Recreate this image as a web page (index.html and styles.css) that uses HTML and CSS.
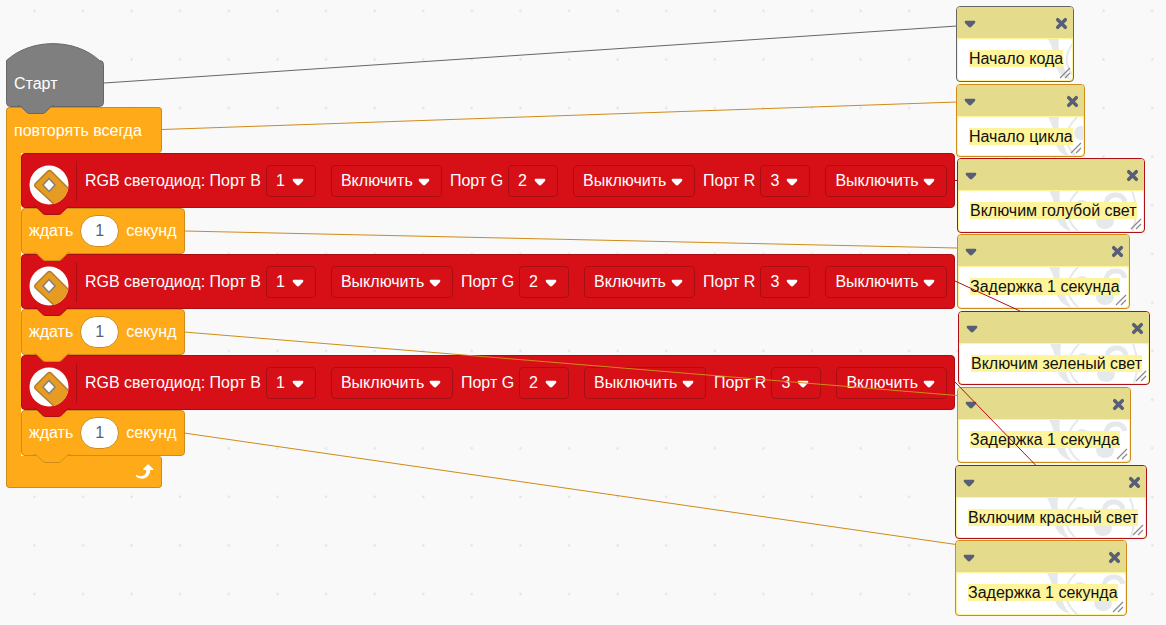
FILE: index.html
```html
<!DOCTYPE html>
<html lang="ru">
<head>
<meta charset="utf-8">
<title>Редактор блоков</title>
<link rel="stylesheet" href="styles.css">
</head>
<body>
<main class="workspace">
  <svg class="grid" aria-hidden="true">
    <defs>
      <pattern id="dots" x="10" y="-13.6" width="48.6" height="48.6" patternUnits="userSpaceOnUse">
        <rect x="23.4" y="23.4" width="2" height="2" fill="#ddd"/>
      </pattern>
    </defs>
    <rect width="100%" height="100%" fill="url(#dots)"/>
  </svg>
  <svg class="defs" aria-hidden="true">
    <defs>
      <symbol id="bump" viewBox="0 0 36 10">
        <path d="M0 0V1C2 1 3 2 4 3L8 7C9 8 10 8.5 12 8.5H24C26 8.5 27 8 28 7L32 3C33 2 34 1 36 1V0Z" fill="currentColor"/>
        <path d="M0 .5C2 .5 3 1.500 4 2.500L8 6.500C9 7.500 10 8.500 12 8.500H24C26 8.500 27 7.500 28 6.500L32 2.500C33 1.500 34 .5 36 .5" fill="none" stroke="var(--edge)"/>
      </symbol>
      <symbol id="caret" viewBox="0 0 12 8">
        <path d="M1.500 .8H10.500Q12 1.400 11 3L7.400 6.800Q6 8 4.600 6.800L1 3Q0 1.400 1.500 .8Z" fill="currentColor"/>
      </symbol>
      <symbol id="cross" viewBox="0 0 12 12">
        <path d="M2.500 2.500L9.500 9.500M9.500 2.500L2.500 9.500" stroke="currentColor" stroke-width="3.200" stroke-linecap="round"/>
      </symbol>
      <symbol id="led" viewBox="0 0 40 40">
        <clipPath id="disc"><circle cx="20" cy="20" r="19.500"/></clipPath>
        <circle cx="20" cy="20" r="19.500" fill="#fff"/>
        <g clip-path="url(#disc)">
          <path d="M18.500 6.500Q20.500 4.500 22.500 6.500L42 26L28 42L6.500 22Q5 20.500 6.500 18.500Z" fill="#e69b22" stroke="#b37d2c" stroke-width="1.500"/>
        </g>
        <path d="M20 13.500L26 20L20 26.500L14 20Z" fill="#fff" stroke="#808080" stroke-width="1.500"/>
      </symbol>
      <symbol id="panda" viewBox="0 0 90 42">
        <g fill="#e6e9ec">
          <path d="M1 0H12Q10 13 16 24Q17 33 24 41Q10 37 8 24Q7 10 1 0Z"/>
          <ellipse cx="34" cy="16" rx="7" ry="7"/>
          <ellipse cx="57" cy="30" rx="9" ry="8"/>
        </g>
        <g fill="none" stroke="#e6e9ec">
          <path d="M30 0Q18 12 20 24Q22 34 32 42" stroke-width="2"/>
          <path d="M84 0Q92 20 84 42" stroke-width="2"/>
          <path d="M77 11Q75 3 66 4Q56 6 59 18" stroke-width="5"/>
        </g>
      </symbol>
      <symbol id="grip" viewBox="0 0 12 12">
        <path d="M1 11L11 1M6 11L11 6" stroke="#888" stroke-width="1.200"/>
      </symbol>
    </defs>
  </svg>

  <section class="script">
    <div class="hat">
      <svg class="hat-shape" viewBox="0 0 98 64" aria-hidden="true"><path d="M.5 17.500C25 -5 69 -5 93.500 17.500Q97.500 17.500 97.500 21.500V59.500Q97.500 63.500 93.500 63.500H4.500Q.5 63.500 .5 59.500Z" fill="#7f7f7f" stroke="#666"/></svg>
      <span class="hat-label">Старт</span>
      <svg class="bump" aria-hidden="true"><use href="#bump"/></svg>
    </div>

    <div class="loop">
      <div class="loop-head">повторять всегда</div>
      <div class="loop-body">
        <div class="loop-arm"></div>
        <div class="loop-stack">

          <div class="block led">
            <svg class="led-icon" aria-hidden="true"><use href="#led"/></svg>
            <label class="port">RGB светодиод: Порт B <span class="drop num"><select><option>1</option></select><svg><use href="#caret"/></svg></span></label>
            <span class="drop on"><select aria-label="Порт B"><option>Включить</option><option>Выключить</option></select><svg><use href="#caret"/></svg></span>
            <label class="port">Порт G <span class="drop num"><select><option>2</option></select><svg><use href="#caret"/></svg></span></label>
            <span class="drop off"><select aria-label="Порт G"><option>Выключить</option><option>Включить</option></select><svg><use href="#caret"/></svg></span>
            <label class="port">Порт R <span class="drop num"><select><option>3</option></select><svg><use href="#caret"/></svg></span></label>
            <span class="drop off"><select aria-label="Порт R"><option>Выключить</option><option>Включить</option></select><svg><use href="#caret"/></svg></span>
            <svg class="bump" aria-hidden="true"><use href="#bump"/></svg>
          </div>
          <div class="block wait">
            <label class="seconds">ждать <input type="text" value="1"> секунд</label>
            <svg class="bump" aria-hidden="true"><use href="#bump"/></svg>
          </div>

          <div class="block led">
            <svg class="led-icon" aria-hidden="true"><use href="#led"/></svg>
            <label class="port">RGB светодиод: Порт B <span class="drop num"><select><option>1</option></select><svg><use href="#caret"/></svg></span></label>
            <span class="drop off"><select aria-label="Порт B"><option>Выключить</option><option>Включить</option></select><svg><use href="#caret"/></svg></span>
            <label class="port">Порт G <span class="drop num"><select><option>2</option></select><svg><use href="#caret"/></svg></span></label>
            <span class="drop on"><select aria-label="Порт G"><option>Включить</option><option>Выключить</option></select><svg><use href="#caret"/></svg></span>
            <label class="port">Порт R <span class="drop num"><select><option>3</option></select><svg><use href="#caret"/></svg></span></label>
            <span class="drop off"><select aria-label="Порт R"><option>Выключить</option><option>Включить</option></select><svg><use href="#caret"/></svg></span>
            <svg class="bump" aria-hidden="true"><use href="#bump"/></svg>
          </div>
          <div class="block wait">
            <label class="seconds">ждать <input type="text" value="1"> секунд</label>
            <svg class="bump" aria-hidden="true"><use href="#bump"/></svg>
          </div>

          <div class="block led">
            <svg class="led-icon" aria-hidden="true"><use href="#led"/></svg>
            <label class="port">RGB светодиод: Порт B <span class="drop num"><select><option>1</option></select><svg><use href="#caret"/></svg></span></label>
            <span class="drop off"><select aria-label="Порт B"><option>Выключить</option><option>Включить</option></select><svg><use href="#caret"/></svg></span>
            <label class="port">Порт G <span class="drop num"><select><option>2</option></select><svg><use href="#caret"/></svg></span></label>
            <span class="drop off"><select aria-label="Порт G"><option>Выключить</option><option>Включить</option></select><svg><use href="#caret"/></svg></span>
            <label class="port">Порт R <span class="drop num"><select><option>3</option></select><svg><use href="#caret"/></svg></span></label>
            <span class="drop on"><select aria-label="Порт R"><option>Включить</option><option>Выключить</option></select><svg><use href="#caret"/></svg></span>
            <svg class="bump" aria-hidden="true"><use href="#bump"/></svg>
          </div>
          <div class="block wait">
            <label class="seconds">ждать <input type="text" value="1"> секунд</label>
            <svg class="bump" aria-hidden="true"><use href="#bump"/></svg>
          </div>

        </div>
      </div>
      <div class="loop-foot">
        <svg class="repeat" viewBox="0 0 24 24" aria-hidden="true">
          <path d="M21.800 11h-2.600c0 1.500-.3 2.900-1 4.200c-.8 1.600-2.100 2.800-3.700 3.600c-1.500.8-3.300 1.100-4.900.8c-1.600-.2-3.200-1-4.400-2.100c-.4-.3-.4-.9-.1-1.200c.3-.4.9-.4 1.200-.1c1 .7 2.200 1.100 3.400 1.100s2.300-.3 3.300-1c.9-.6 1.600-1.500 2-2.600c.3-.9.4-1.800.2-2.800h-2.400c-.4 0-.7-.3-.7-.7c0-.2.1-.3.2-.4l4.400-4.400c.3-.3.7-.3.9 0L22 9.800c.3.3.4.6.3.9S22 11 21.800 11z" fill="#fff"/>
        </svg>
      </div>
    </div>
  </section>

  <article class="note gray n1">
    <header><button aria-label="Свернуть"><svg class="fold"><use href="#caret"/></svg></button><button aria-label="Удалить"><svg class="close"><use href="#cross"/></svg></button></header>
    <div class="note-body"><svg class="panda"><use href="#panda"/></svg><p><mark>Начало кода</mark></p><svg class="grip"><use href="#grip"/></svg></div>
  </article>
  <article class="note orange n2">
    <header><button aria-label="Свернуть"><svg class="fold"><use href="#caret"/></svg></button><button aria-label="Удалить"><svg class="close"><use href="#cross"/></svg></button></header>
    <div class="note-body"><svg class="panda"><use href="#panda"/></svg><p><mark>Начало цикла</mark></p><svg class="grip"><use href="#grip"/></svg></div>
  </article>
  <article class="note red n3">
    <header><button aria-label="Свернуть"><svg class="fold"><use href="#caret"/></svg></button><button aria-label="Удалить"><svg class="close"><use href="#cross"/></svg></button></header>
    <div class="note-body"><svg class="panda"><use href="#panda"/></svg><p><mark>Включим голубой свет</mark></p><svg class="grip"><use href="#grip"/></svg></div>
  </article>
  <article class="note orange n4">
    <header><button aria-label="Свернуть"><svg class="fold"><use href="#caret"/></svg></button><button aria-label="Удалить"><svg class="close"><use href="#cross"/></svg></button></header>
    <div class="note-body"><svg class="panda"><use href="#panda"/></svg><p><mark>Задержка 1 секунда</mark></p><svg class="grip"><use href="#grip"/></svg></div>
  </article>
  <article class="note red n5">
    <header><button aria-label="Свернуть"><svg class="fold"><use href="#caret"/></svg></button><button aria-label="Удалить"><svg class="close"><use href="#cross"/></svg></button></header>
    <div class="note-body"><svg class="panda"><use href="#panda"/></svg><p><mark>Включим зеленый свет</mark></p><svg class="grip"><use href="#grip"/></svg></div>
  </article>
  <article class="note orange n6">
    <header><button aria-label="Свернуть"><svg class="fold"><use href="#caret"/></svg></button><button aria-label="Удалить"><svg class="close"><use href="#cross"/></svg></button></header>
    <div class="note-body"><svg class="panda"><use href="#panda"/></svg><p><mark>Задержка 1 секунда</mark></p><svg class="grip"><use href="#grip"/></svg></div>
  </article>
  <article class="note red n7">
    <header><button aria-label="Свернуть"><svg class="fold"><use href="#caret"/></svg></button><button aria-label="Удалить"><svg class="close"><use href="#cross"/></svg></button></header>
    <div class="note-body"><svg class="panda"><use href="#panda"/></svg><p><mark>Включим красный свет</mark></p><svg class="grip"><use href="#grip"/></svg></div>
  </article>
  <article class="note orange n8">
    <header><button aria-label="Свернуть"><svg class="fold"><use href="#caret"/></svg></button><button aria-label="Удалить"><svg class="close"><use href="#cross"/></svg></button></header>
    <div class="note-body"><svg class="panda"><use href="#panda"/></svg><p><mark>Задержка 1 секунда</mark></p><svg class="grip"><use href="#grip"/></svg></div>
  </article>

  <svg class="links" aria-hidden="true">
    <g stroke="#666"><path d="M104 83L957 26"/></g>
    <g stroke="#cf8b17"><path d="M162 129.500L957 102M184 231L957 248M184 332L957 395.500M184 433L956 544.500"/></g>
    <g stroke="#ae1018"><path d="M955 180.500H958M955 281L1020 311M955 382L1035.500 465"/></g>
  </svg>
</main>
</body>
</html>
```

FILE: styles.css
```css
* { box-sizing: border-box; }

body {
  margin: 0;
  font: 16px/20px "Liberation Sans", Arial, sans-serif;
}

.workspace {
  --orange: #ffab19;
  --orange-edge: #cf8b17;
  --red: #d71017;
  --red-edge: #a80f14;
  position: relative;
  min-height: 100vh;
  padding: 43px 6px 0;
  overflow: hidden;
  background: #f9f9f9;
}

.grid, .links {
  position: absolute;
  inset: 0;
  width: 100%;
  height: 100%;
  pointer-events: none;
}

.links { fill: none; }
.defs { position: absolute; width: 0; height: 0; }

.script {
  position: relative;
  display: flex;
  flex-direction: column;
  align-items: flex-start;
  color: #fff;
}

.bump {
  position: absolute;
  z-index: 1;
  left: 12px;
  bottom: -9px;
  width: 36px;
  height: 10px;
}

.hat {
  --edge: #666;
  position: relative;
  width: 98px;
  height: 64px;
  padding: 31px 8px 0;
}
.hat .bump { bottom: -8px; color: #7f7f7f; }
.hat-shape { position: absolute; inset: 0; width: 98px; height: 64px; }
.hat-label { position: relative; }

.loop-head, .loop-foot {
  width: 156px;
  border: 1px solid var(--orange-edge);
  background: var(--orange);
}
.loop-head {
  height: 46px;
  padding: 13px 7px;
  border-bottom: 0;
  border-radius: 4px 4px 4px 0;
}
.loop-body { display: flex; }
.loop-arm {
  width: 15px;
  border-left: 1px solid var(--orange-edge);
  background: var(--orange);
}
.loop-stack {
  display: flex;
  flex-direction: column;
  align-items: flex-start;
}
.loop-foot {
  display: flex;
  justify-content: flex-end;
  height: 32px;
  padding: 3px 6px 0;
  border-top: 0;
  border-radius: 0 4px 4px 4px;
}
.repeat { width: 24px; height: 24px; }

.block {
  position: relative;
  display: flex;
  align-items: center;
  border: 1px solid var(--edge);
  border-radius: 4px;
  white-space: nowrap;
}
.wait {
  --edge: var(--orange-edge);
  height: 46px;
  padding: 0 7px;
  background: var(--orange);
}
.wait .bump { color: var(--orange); }
.led {
  --edge: var(--red-edge);
  height: 55px;
  padding: 0 7px;
  background: var(--red);
}
.led .bump { color: var(--red); }
.led-icon { width: 40px; height: 40px; margin-top: 8px; }

.seconds { display: flex; align-items: center; gap: 7px; }
.port { display: flex; align-items: center; gap: 5px; }

.seconds input {
  width: 39px;
  height: 32px;
  padding: 0;
  border: 1px solid var(--orange-edge);
  border-radius: 16px;
  background: #fff;
  color: #575e75;
  font: inherit;
  text-align: center;
}

.led-icon + .port {
  height: 40px;
  margin-left: 7px;
  padding-left: 8px;
  border-left: 1px solid var(--red-edge);
}
.drop + .port { margin-left: 8px; }
.port + .drop { margin-left: 15px; }

.drop { position: relative; height: 32px; }
.num { width: 50px; }
.on { width: 111px; }
.off { width: 122px; }
.drop select {
  appearance: none;
  width: 100%;
  height: 32px;
  padding: 0 0 0 9px;
  border: 1px solid var(--red-edge);
  border-radius: 4px;
  background: transparent;
  color: #fff;
  font: inherit;
}
.drop svg {
  position: absolute;
  top: 13px;
  right: 12px;
  width: 12px;
  height: 8px;
  pointer-events: none;
}

.note {
  position: absolute;
  display: flex;
  flex-direction: column;
  height: 75px;
  border: 1px solid var(--edge);
  border-radius: 4px;
  overflow: hidden;
  background: #fef49c;
}
.gray { --edge: #666; }
.orange { --edge: #cf8b17; }
.red { --edge: #ae1018; }

.note header {
  display: flex;
  align-items: center;
  justify-content: space-between;
  height: 31px;
  padding: 2px 5px 0 7px;
  background: #e4db8c;
}
.note button {
  display: flex;
  padding: 0;
  border: 0;
  background: none;
  color: #575e75;
}
.fold { width: 12px; height: 8px; }
.close { width: 13px; height: 13px; }

.note-body {
  position: relative;
  flex: 1;
  margin: 1px;
  padding: 10px 11px;
  border-radius: 3px;
  overflow: hidden;
  background: #fff;
}
.note p { position: relative; margin: 0; white-space: nowrap; }
.note mark { background: #fef49c; color: #111; }
.panda { position: absolute; top: 0; left: 89px; width: 90px; height: 42px; }
.grip { position: absolute; right: 1px; bottom: 1px; width: 12px; height: 12px; }

.n1 { left: 956px; top: 6px; width: 118px; height: 76px; }
.n2 { left: 956px; top: 84px; width: 129px; height: 73px; }
.n3 { left: 957px; top: 158px; width: 188px; }
.n4 { left: 957px; top: 234px; width: 173px; }
.n5 { left: 958px; top: 311px; width: 192px; height: 74px; }
.n6 { left: 957px; top: 387px; width: 174px; height: 76px; }
.n7 { left: 955px; top: 465px; width: 192px; height: 74px; }
.n8 { left: 955px; top: 540px; width: 172px; height: 76px; }
```
